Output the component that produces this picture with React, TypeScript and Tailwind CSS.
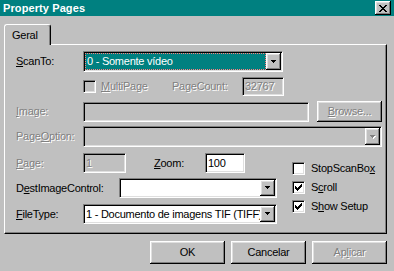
import type { ReactNode } from "react";

const sunken =
  "border border-t-[#808080] border-l-[#808080] border-b-white border-r-white shadow-[inset_1px_1px_0_#000,inset_-1px_-1px_0_#dfdfdf]";
const raised =
  "bg-[#c0c0c0] shadow-[inset_-1px_-1px_0_#000,inset_1px_1px_0_#fff,inset_-2px_-2px_0_#808080,inset_2px_2px_0_#dfdfdf]";
const grey = "text-[#808080] [text-shadow:1px_1px_0_#fff]";

function CloseGlyph() {
  const rows = ["11000011", "01100110", "00111100", "00011000", "00111100", "01100110", "11000011"];
  return (
    <svg width="8" height="7" shapeRendering="crispEdges">
      {rows.map((r, y) =>
        r.split("").map((c, x) => (c === "1" ? <rect key={`${x}-${y}`} x={x} y={y} width="1" height="1" fill="#000" /> : null))
      )}
    </svg>
  );
}

function Arrow({ disabled }: { disabled?: boolean }) {
  const d = "M0 0h5v1h-1v1h-1v1h-1v-1h-1v-1h-1z";
  return (
    <svg width="6" height="4" shapeRendering="crispEdges">
      {disabled && <path d={d} fill="#fff" transform="translate(1 1)" />}
      <path d={d} fill={disabled ? "#808080" : "#000"} />
    </svg>
  );
}

function CheckMark() {
  // classic 7x7 tick, one 3px tall column per x
  const tops = [2, 3, 4, 3, 2, 1, 0];
  return (
    <svg width="7" height="7" shapeRendering="crispEdges">
      {tops.map((t, x) => (
        <rect key={x} x={x} y={t} width="1" height="3" fill="#000" />
      ))}
    </svg>
  );
}

function Check({ checked, disabled }: { checked?: boolean; disabled?: boolean }) {
  return (
    <div
      className={`w-[13px] h-[13px] shrink-0 flex items-center justify-center ${sunken} ${
        disabled ? "bg-[#c0c0c0]" : "bg-white"
      }`}
    >
      {checked && <CheckMark />}
    </div>
  );
}

function Field({ className, disabled, children }: { className: string; disabled?: boolean; children?: ReactNode }) {
  return (
    <div
      className={`${sunken} ${disabled ? "bg-[#c0c0c0]" : "bg-white"} flex items-center overflow-hidden whitespace-nowrap pl-[2px] ${className}`}
    >
      {children}
    </div>
  );
}

function Combo({ className, disabled, children }: { className: string; disabled?: boolean; children?: ReactNode }) {
  return (
    <div className={`${sunken} ${disabled ? "bg-[#c0c0c0]" : "bg-white"} flex p-[1px] ${className}`}>
      <div className="flex-1 min-w-0 flex items-center overflow-hidden whitespace-nowrap">{children}</div>
      <div className={`w-[15px] h-full shrink-0 flex items-center justify-center ${raised}`}>
        <Arrow disabled={disabled} />
      </div>
    </div>
  );
}

function Button({ children, className }: { children: ReactNode; className: string }) {
  return <div className={`${raised} flex items-center justify-center ${className}`}>{children}</div>;
}

function Label({ children, className = "w-[67px]", disabled }: { children: ReactNode; className?: string; disabled?: boolean }) {
  return <div className={`shrink-0 whitespace-nowrap ${className} ${disabled ? grey : ""}`}>{children}</div>;
}

export default function App() {
  return (
    <div className="w-[394px] h-[271px] overflow-hidden bg-[#c0c0c0] font-['Liberation_Sans',Arial,sans-serif] text-[11px] leading-none text-black">
      <div className="h-[16px] bg-[#008080] flex items-start justify-between pl-[3px] pr-[3px]">
        <span className="text-white font-bold text-[11px] leading-[16px] tracking-[0.1px]">Property Pages</span>
        <div className={`mt-[1px] w-[16px] h-[14px] flex items-center justify-center ${raised}`}>
          <CloseGlyph />
        </div>
      </div>

      <div className="mt-[8px] ml-[4px] w-[383px] tracking-[-0.25px]">
        <div className="relative z-10 -mb-px w-[47px] h-[21px] bg-[#c0c0c0] border-l border-t border-r border-l-white border-t-white border-r-black rounded-t-[3px] shadow-[inset_-1px_0_0_#808080] pl-[7px] pt-[5px]">
          Geral
        </div>
        <div className="h-[190px] border border-t-white border-l-white border-r-black border-b-black shadow-[inset_-1px_-1px_0_#808080] pl-[11px] pt-[6px]">
          <div className="flex items-center h-[21px]">
            <Label>
              <u>S</u>canTo:
            </Label>
            <Combo className="w-[200px] h-[21px]">
              <div className="h-full flex-1 flex items-center bg-[#008080] text-white border border-dotted border-[#ff7f7f] pl-[1px]">
                0 - Somente vídeo
              </div>
            </Combo>
          </div>

          <div className="flex items-center h-[19px] mt-[5px]">
            <div className="w-[67px] shrink-0" />
            <div className="w-[89px] flex items-center gap-[5px]">
              <Check disabled />
              <span className={grey}>
                <u>M</u>ultiPage
              </span>
            </div>
            <Label className="w-[70px]" disabled>
              PageCount:
            </Label>
            <Field className="w-[42px] h-[19px]" disabled>
              <span className={grey}>32767</span>
            </Field>
          </div>

          <div className="flex items-center h-[21px] mt-[5px]">
            <Label disabled>
              <u>I</u>mage:
            </Label>
            <Field className="w-[226px] h-[20px]" disabled />
            <Button className="ml-[8px] w-[65px] h-[21px]">
              <span className={grey}>
                <u>B</u>rowse...
              </span>
            </Button>
          </div>

          <div className="flex items-center h-[21px] mt-[4px]">
            <Label disabled>
              Page<u>O</u>ption:
            </Label>
            <Combo className="w-[299px] h-[21px]" disabled />
          </div>

          <div className="flex">
            <div className="w-[261px] pt-[6px]">
              <div className="flex items-center h-[20px]">
                <Label disabled>
                  <u>P</u>age:
                </Label>
                <Field className="w-[43px] h-[20px]" disabled>
                  <span className={grey}>1</span>
                </Field>
                <Label className="ml-[28px] w-[51px]">
                  <u>Z</u>oom:
                </Label>
                <Field className="w-[40px] h-[20px]">100</Field>
              </div>
              <div className="flex items-center h-[20px] mt-[5px]">
                <Label className="w-[103px]">
                  D<u>e</u>stImageControl:
                </Label>
                <Combo className="w-[158px] h-[20px]" />
              </div>
              <div className="flex items-center h-[20px] mt-[6px]">
                <Label>
                  <u>F</u>ileType:
                </Label>
                <Combo className="w-[194px] h-[20px]">
                  <span className="pl-[1px]">1 - Documento de imagens TIF (TIFF)</span>
                </Combo>
              </div>
            </div>

            <div className="ml-[15px] pt-[15px] flex flex-col gap-[6px]">
              <div className="flex items-center gap-[6px] h-[13px]">
                <Check />
                <span>
                  StopScanBo<u>x</u>
                </span>
              </div>
              <div className="flex items-center gap-[6px] h-[13px]">
                <Check checked />
                <span>
                  S<u>c</u>roll
                </span>
              </div>
              <div className="flex items-center gap-[6px] h-[13px]">
                <Check checked />
                <span>
                  S<u>h</u>ow Setup
                </span>
              </div>
            </div>
          </div>
        </div>
      </div>

      <div className="mt-[7px] flex justify-end gap-[6px] pr-[7px] tracking-[-0.25px]">
        <Button className="w-[75px] h-[23px]">OK</Button>
        <Button className="w-[75px] h-[23px]">Cancelar</Button>
        <Button className="w-[75px] h-[23px]">
          <span className={grey}>
            Ap<u>l</u>icar
          </span>
        </Button>
      </div>
    </div>
  );
}
